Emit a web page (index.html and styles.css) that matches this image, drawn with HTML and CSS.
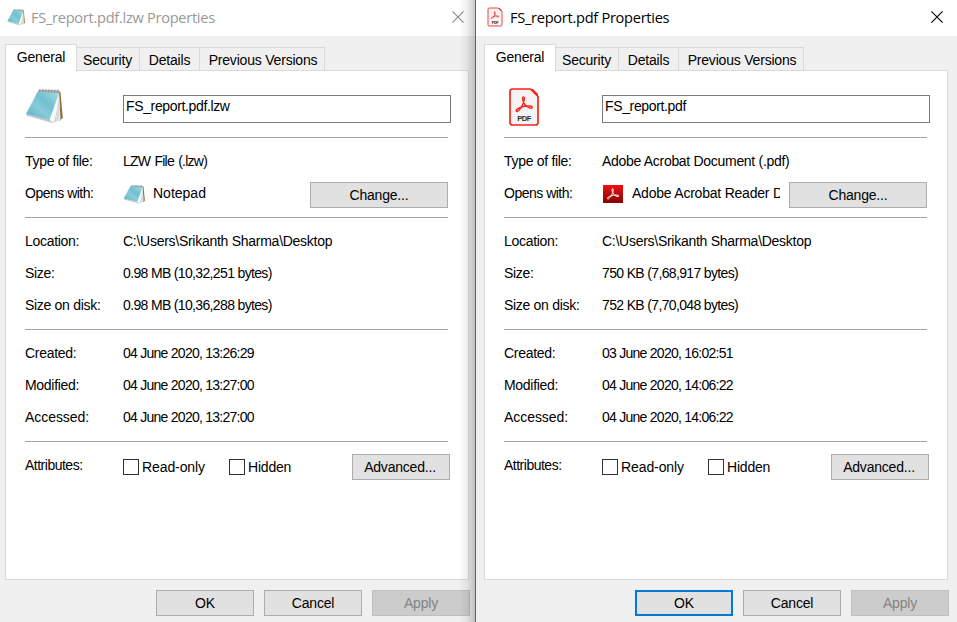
FILE: index.html
```html
<!DOCTYPE html>
<html lang="en">
<head>
<meta charset="utf-8">
<title>Properties</title>
<link rel="stylesheet" href="styles.css">
</head>
<body>
<svg class="defs" width="0" height="0" aria-hidden="true">
  <defs>
    <linearGradient id="page" x1="0" y1="1" x2="1" y2="0">
      <stop offset="0" stop-color="#56acbe"/><stop offset=".4" stop-color="#8accd9"/><stop offset=".6" stop-color="#6fc0d1"/><stop offset="1" stop-color="#a8dbe5"/>
    </linearGradient>
    <linearGradient id="red" x1="0" y1="0" x2="0" y2="1">
      <stop offset="0" stop-color="#f01010"/><stop offset="1" stop-color="#860206"/>
    </linearGradient>
    <symbol id="notepad" viewBox="0 0 38 37">
      <path d="M33 4 35.500 5 37.800 31 34 34z" fill="#8f703c"/>
      <path d="M14 2.500 34 4 35.500 32.500 29 36.300 1 29z" fill="#eef2f3"/>
      <path d="M34 6 24.500 33 29 36 35 32z" fill="#dfe5e7"/>
      <path d="M33.500 7 23.500 32.500 28 35.500 32 24z" fill="#f8fafa"/>
      <path d="M13 4 34 6 24.500 33 1 27z" fill="url(#page)"/>
      <path d="M24.500 33 1 27 1.200 28.300 28.500 36.300z" fill="#b9c4c7"/>
      <path d="M34 14 30 35M34.500 20 32 34" stroke="#c3ccd0" stroke-width=".6"/>
      <path d="M14 2.800 34.500 3.300 34.300 6.300 13 4.800z" fill="#a9b2b3"/>
      <path d="M15 2 14.600 4.800M18 2 17.600 5M21 2.100 20.600 5.200M24 2.200 23.600 5.400M27 2.400 26.600 5.600M30 2.500 29.600 5.800M33 2.700 32.600 6" stroke="#7a8585" stroke-width=".8"/>
    </symbol>
    <symbol id="ribbon" viewBox="0 0 18 17">
      <path d="M1.400 15.300C-.2 13.200 5.800 11 9.700 10.300 13.500 9.600 17.500 9.800 17.200 11.500 16.800 13.200 12.500 11.600 10.300 9 8 6.300 6.500 1 8.400.9 10.500 1 8.900 6.400 6.900 10.200 5.300 13.200 2.500 16.500 1.400 15.300z" fill="none" stroke="currentColor" stroke-linejoin="round"/>
    </symbol>
    <symbol id="pdf" viewBox="0 0 32 40">
      <path d="M4.500 2H22.500L30 9.500V35.500Q30 38 27.500 38H4.500Q2 38 2 35.500V4.500Q2 2 4.500 2z" fill="#f5f3f3" stroke="#f4251c" stroke-width="1.700"/>
      <path d="M22.500 2 30 9.500V7L25 2z" fill="#f4251c"/>
    </symbol>
  </defs>
</svg>
<main class="desktop">
  <section class="window inactive">
    <header class="titlebar">
      <svg class="title-icon note"><use href="#notepad"/></svg>
      <h1 class="title lzw">FS_report.pdf.lzw Properties</h1>
      <svg class="close" viewBox="0 0 12 12"><path d="M.4.400 11.600 11.600M11.600.400.4 11.600"/></svg>
    </header>
    <nav class="tabs"><span class="tab current">General</span><span class="tab security">Security</span><span class="tab details">Details</span><span class="tab previous">Previous Versions</span></nav>
    <div class="panel">
      <div class="file">
        <svg class="file-icon note"><use href="#notepad"/></svg>
        <div class="field">FS_report.pdf.lzw</div>
      </div>
      <div class="group">
        <div class="row"><span class="label">Type of file:</span><span class="value type">LZW File (.lzw)</span></div>
        <div class="row"><span class="label tight">Opens with:</span><svg class="app-icon note" viewBox="0 0 38 37" preserveAspectRatio="none"><use href="#notepad" width="38" height="37"/></svg><span class="app wide">Notepad</span><button class="button change">Change...</button></div>
      </div>
      <div class="group">
        <div class="row"><span class="label">Location:</span><span class="value path">C:\Users\Srikanth Sharma\Desktop</span></div>
        <div class="row"><span class="label">Size:</span><span class="value size">0.98 MB (10,32,251 bytes)</span></div>
        <div class="row"><span class="label">Size on disk:</span><span class="value size">0.98 MB (10,36,288 bytes)</span></div>
      </div>
      <div class="group">
        <div class="row"><span class="label">Created:</span><span class="value date">04 June 2020, 13:26:29</span></div>
        <div class="row"><span class="label">Modified:</span><span class="value date">04 June 2020, 13:27:00</span></div>
        <div class="row"><span class="label wide">Accessed:</span><span class="value date">04 June 2020, 13:27:00</span></div>
      </div>
      <div class="group">
        <div class="row"><span class="label tight">Attributes:</span><span class="check readonly"><i class="box"></i>Read-only</span><span class="check"><i class="box"></i>Hidden</span><button class="button advanced">Advanced...</button></div>
      </div>
    </div>
    <footer class="actions"><button class="button">OK</button><button class="button">Cancel</button><button class="button disabled">Apply</button></footer>
    <div class="shade"></div>
  </section>
  <section class="window active">
    <header class="titlebar">
      <svg class="title-icon pdf" viewBox="0 0 32 40"><use href="#pdf"/><use class="ribbon" href="#ribbon" x="7" y="8" width="18" height="17"/><text class="pdf-text" x="16" y="34">PDF</text></svg>
      <h1 class="title">FS_report.pdf Properties</h1>
      <svg class="close" viewBox="0 0 12 12"><path d="M.4.400 11.600 11.600M11.600.400.4 11.600"/></svg>
    </header>
    <nav class="tabs"><span class="tab current">General</span><span class="tab security">Security</span><span class="tab details">Details</span><span class="tab previous">Previous Versions</span></nav>
    <div class="panel">
      <div class="file">
        <svg class="file-icon pdf" viewBox="0 0 32 40"><use href="#pdf"/><use class="ribbon" href="#ribbon" x="7" y="9" width="18" height="17"/><text class="pdf-text" x="16" y="34">PDF</text></svg>
        <div class="field">FS_report.pdf</div>
      </div>
      <div class="group">
        <div class="row"><span class="label">Type of file:</span><span class="value document">Adobe Acrobat Document (.pdf)</span></div>
        <div class="row"><span class="label tight">Opens with:</span><svg class="app-icon acrobat" viewBox="0 0 20 18"><rect width="20" height="18" fill="url(#red)"/><use class="ribbon" href="#ribbon" x="3" y="3" width="14" height="12"/></svg><span class="app">Adobe Acrobat Reader DC</span><button class="button change">Change...</button></div>
      </div>
      <div class="group">
        <div class="row"><span class="label">Location:</span><span class="value path">C:\Users\Srikanth Sharma\Desktop</span></div>
        <div class="row"><span class="label">Size:</span><span class="value size">750 KB (7,68,917 bytes)</span></div>
        <div class="row"><span class="label">Size on disk:</span><span class="value size">752 KB (7,70,048 bytes)</span></div>
      </div>
      <div class="group">
        <div class="row"><span class="label">Created:</span><span class="value date">03 June 2020, 16:02:51</span></div>
        <div class="row"><span class="label">Modified:</span><span class="value date">04 June 2020, 14:06:22</span></div>
        <div class="row"><span class="label wide">Accessed:</span><span class="value date">04 June 2020, 14:06:22</span></div>
      </div>
      <div class="group">
        <div class="row"><span class="label tight">Attributes:</span><span class="check readonly"><i class="box"></i>Read-only</span><span class="check"><i class="box"></i>Hidden</span><button class="button advanced">Advanced...</button></div>
      </div>
    </div>
    <footer class="actions"><button class="button default">OK</button><button class="button">Cancel</button><button class="button disabled">Apply</button></footer>
  </section>
</main>
</body>
</html>
```
FILE: styles.css
```css
* { box-sizing: border-box; }
body {
  margin: 0;
  overflow: hidden;
  color: #000;
  font: 14px/16px "Liberation Sans", Arial, sans-serif;
  letter-spacing: -.2px;
  white-space: nowrap;
}
.defs { position: absolute; }
.desktop { display: flex; width: 957px; height: 622px; overflow: hidden; }
.window { position: relative; height: 622px; background: #f0f0f0; }
.inactive { width: 475px; padding-left: 5px; }
.active { width: 482px; padding-left: 8px; border-left: 1px solid #606060; }

.titlebar {
  display: flex;
  align-items: center;
  height: 36px;
  margin-left: -5px;
  padding: 0 11px 2px 7px;
  background: #fff;
}
.active .titlebar { margin-left: -8px; padding: 0 14px 2px 11px; }
.title-icon { flex: none; width: 18px; height: 18px; }
.title-icon.pdf { width: 16px; height: 20px; }
.title {
  flex: 1;
  margin: 0 0 0 6px;
  font: 400 14.6px/20px "Open Sans", "Noto Sans", sans-serif;
  letter-spacing: -.28px;
}
.active .title { margin-left: 7px; }
.inactive .title { color: #999; }
.close { width: 12px; height: 12px; stroke: #000; stroke-width: 1.1; }
.inactive .close { stroke: #888; }

.tabs { display: flex; align-items: flex-end; height: 35px; padding-top: 8px; }
.tab {
  height: 24px;
  padding-top: 4px;
  border: 1px solid #d9d9d9;
  border-width: 1px 1px 0 0;
  text-align: center;
}
.current {
  z-index: 1;
  width: 72px;
  height: 28px;
  margin-bottom: -1px;
  border-left-width: 1px;
  background: #fff;
}
.security { width: 63px; padding-right: 1px; }
.details { width: 60px; }
.previous { width: 125px; padding-left: 2px; }

.panel {
  width: 464px;
  height: 510px;
  margin-top: -1px;
  padding-left: 19px;
  border: 1px solid #d9d9d9;
  background: #fff;
}
.file { display: flex; height: 66px; padding-top: 16px; }
.file-icon.note { width: 38px; height: 37px; margin-right: 60px; }
.file-icon.pdf { width: 32px; height: 40px; margin: 0 62px 0 4px; }
.field {
  width: 328px;
  height: 28px;
  margin-top: 8px;
  padding: 2px;
  border: 1px solid #7a7a7a;
  letter-spacing: -.36px;
}

.group { width: 423px; padding: 7px 0 8px; border-top: 1px solid #a0a0a0; }
.row { display: flex; align-items: center; height: 32px; }
.label { flex: none; width: 98px; letter-spacing: -.3px; }
.label.tight { letter-spacing: -.5px; }
.label.wide { letter-spacing: -.05px; }
.type { letter-spacing: -.75px; word-spacing: 1px; }
.document { letter-spacing: -.3px; }
.path { letter-spacing: -.27px; }
.size { letter-spacing: -.65px; }
.date { letter-spacing: -.74px; }
.app-icon { flex: none; width: 22px; height: 20px; margin-top: 1px; }
.app-icon.acrobat { width: 20px; height: 18px; margin: 1px 1px 0; }
.app { width: 148px; margin-left: 8px; overflow: hidden; letter-spacing: -.22px; }
.app.wide { letter-spacing: 0; }

.button {
  flex: none;
  width: 98px;
  height: 26px;
  padding: 0;
  border: 1px solid #adadad;
  background: #e1e1e1;
  color: #000;
  font: inherit;
  letter-spacing: inherit;
}
.change { width: 138px; margin: 3px 0 0 auto; }
.advanced { margin: 4px -2px 0 auto; padding-right: 2px; }
.check { display: flex; align-items: center; gap: 3px; margin-top: 4px; }
.readonly { width: 106px; letter-spacing: -.1px; }
.box { width: 16px; height: 16px; border: 1px solid #333; background: #fff; }
.actions { display: flex; gap: 10px; padding: 10px 0 0 151px; }
.default { border: 2px solid #0078d7; }
.disabled { border-color: #bfbfbf; background: #ccc; color: #838383; }
.shade {
  position: absolute;
  top: 0;
  right: 0;
  width: 16px;
  height: 622px;
  background: linear-gradient(90deg, transparent, rgba(0, 0, 0, .06) 50%, rgba(0, 0, 0, .2));
}

.ribbon { color: #f4251c; stroke-width: 1.4; }
.acrobat .ribbon { color: #fff; }
.pdf-text {
  fill: #2c2c2c;
  font: 700 7.500px "Liberation Sans", sans-serif;
  letter-spacing: -.5px;
  text-anchor: middle;
}
```
